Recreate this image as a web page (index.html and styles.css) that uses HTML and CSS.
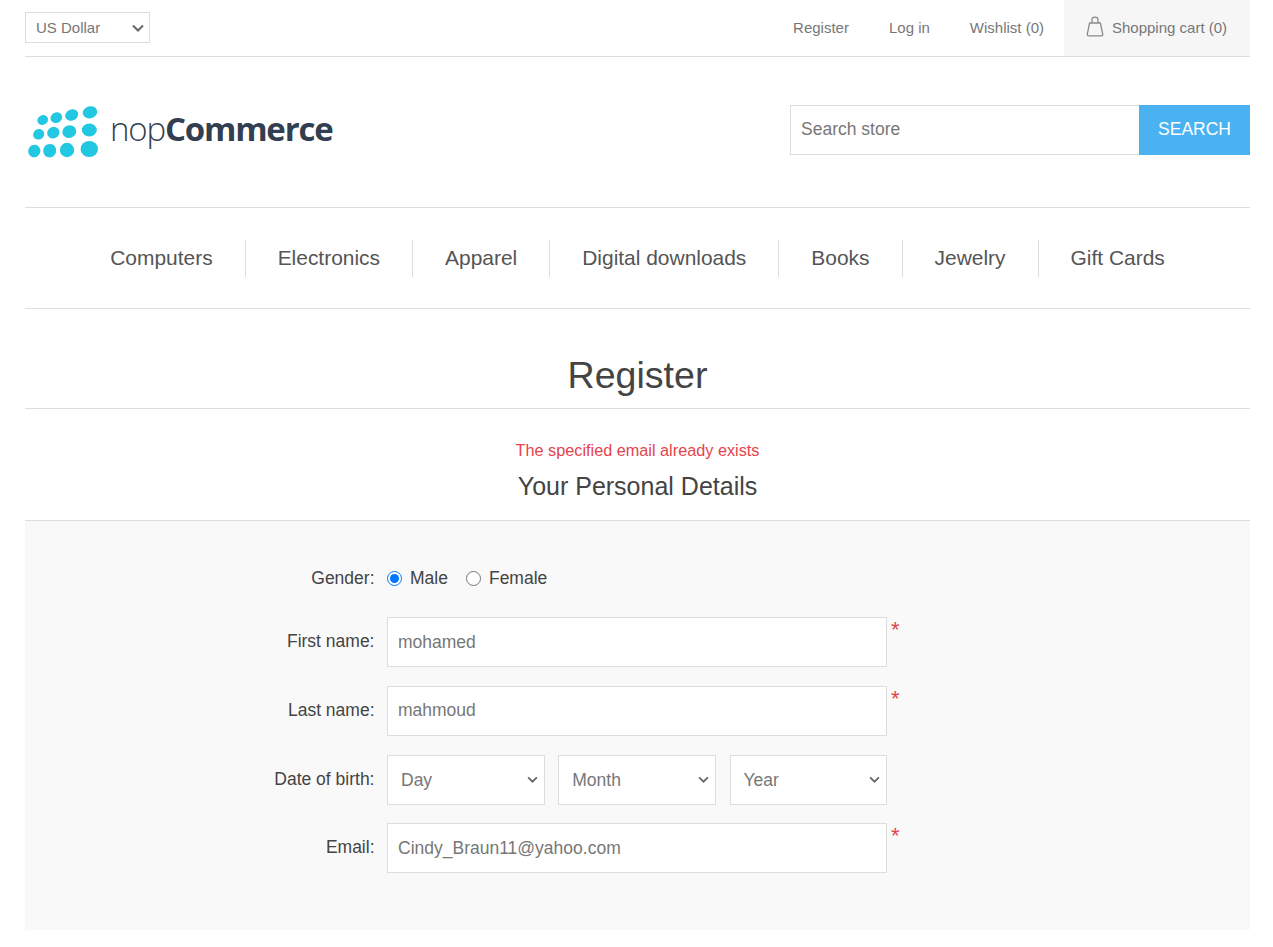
FILE: index.html
```html
<!DOCTYPE html>
<html lang="en">
<head>
    <meta charset="UTF-8">
    <title>Register</title>
    <link rel="stylesheet" href="styles.css">
</head>
<body>
    <div class="master">
        <div class="header-links">
            <select class="currency">
                <option>US Dollar</option>
            </select>
            <ul class="top-links">
                <li><a href="#">Register</a></li>
                <li><a href="#">Log in</a></li>
                <li><a href="#">Wishlist (0)</a></li>
                <li class="cart-link">
                    <svg class="cart-icon" width="18" height="21" viewBox="0 0 18 21" fill="none" stroke="#8a8a8a" stroke-width="1.3">
                        <path d="M3.6 7 L1.3 18 Q1 19.8 2.8 19.8 H15.2 Q17 19.8 16.7 18 L14.4 7 Z"/>
                        <path d="M6 7 V3.6 Q6 1.2 9 1.2 Q12 1.2 12 3.6 V7"/>
                    </svg>
                    <a href="#">Shopping cart (0)</a>
                </li>
            </ul>
        </div>

        <div class="header-main">
            <a class="logo" href="#">
                <svg width="72" height="54" viewBox="0 0 72 54" fill="#22c7e2">
                    <ellipse cx="15.7" cy="14" rx="5.5" ry="4.8" transform="rotate(-25 15.7 14)"/>
                    <ellipse cx="29.3" cy="11.7" rx="6" ry="5.2" transform="rotate(-25 29.3 11.7)"/>
                    <ellipse cx="44.7" cy="9" rx="6.7" ry="5.6" transform="rotate(-25 44.7 9)"/>
                    <ellipse cx="63" cy="6.3" rx="7.3" ry="6" transform="rotate(-15 63 6.3)"/>
                    <ellipse cx="11.7" cy="28.3" rx="5.6" ry="5.2" transform="rotate(-25 11.7 28.3)"/>
                    <ellipse cx="26.3" cy="26.7" rx="6.3" ry="5.7" transform="rotate(-25 26.3 26.7)"/>
                    <ellipse cx="42.3" cy="25.7" rx="7" ry="6.3" transform="rotate(-20 42.3 25.7)"/>
                    <ellipse cx="62.3" cy="24" rx="7.5" ry="6.5"/>
                    <ellipse cx="7.3" cy="45" rx="6" ry="6.4" transform="rotate(20 7.3 45)"/>
                    <ellipse cx="22.7" cy="44.7" rx="6.5" ry="6.8" transform="rotate(20 22.7 44.7)"/>
                    <ellipse cx="40" cy="44" rx="7.2" ry="7.2"/>
                    <ellipse cx="62.3" cy="43" rx="8.7" ry="8"/>
                </svg>
                <span class="logo-text">nop<b>Commerce</b></span>
            </a>
            <form class="search-box">
                <input class="search-input" type="text" placeholder="Search store">
                <button class="search-button" type="button">SEARCH</button>
            </form>
        </div>

        <ul class="top-menu">
            <li><a href="#">Computers</a></li>
            <li><a href="#">Electronics</a></li>
            <li><a href="#">Apparel</a></li>
            <li><a href="#">Digital downloads</a></li>
            <li><a href="#">Books</a></li>
            <li><a href="#">Jewelry</a></li>
            <li><a href="#">Gift Cards</a></li>
        </ul>

        <h1 class="page-title">Register</h1>
        <p class="message-error">The specified email already exists</p>
        <h2 class="section-title">Your Personal Details</h2>

        <form class="form-fields">
            <div class="field field-gender">
                <label class="field-label">Gender:</label>
                <span class="gender-option"><input type="radio" name="gender" id="male" checked><label for="male">Male</label></span>
                <span class="gender-option"><input type="radio" name="gender" id="female"><label for="female">Female</label></span>
            </div>
            <div class="field">
                <label class="field-label">First name:</label>
                <input class="text-box" type="text" value="mohamed">
                <span class="required">*</span>
            </div>
            <div class="field">
                <label class="field-label">Last name:</label>
                <input class="text-box" type="text" value="mahmoud">
                <span class="required">*</span>
            </div>
            <div class="field">
                <label class="field-label">Date of birth:</label>
                <div class="date-picker">
                    <select><option>Day</option></select>
                    <select><option>Month</option></select>
                    <select><option>Year</option></select>
                </div>
            </div>
            <div class="field">
                <label class="field-label">Email:</label>
                <input class="text-box" type="text" value="Cindy_Braun11@yahoo.com">
                <span class="required">*</span>
            </div>
        </form>
    </div>
</body>
</html>
```

FILE: styles.css
```css
* {
    box-sizing: border-box;
}

html, body {
    height: 947px;
    overflow: hidden;
}

body {
    margin: 0;
    font-family: "Liberation Sans", Arial, sans-serif;
    font-size: 16px;
    color: #444444;
    background: #ffffff;
}

a {
    color: inherit;
    text-decoration: none;
}

ul {
    list-style: none;
    margin: 0;
    padding: 0;
}

select {
    appearance: none;
    font-family: inherit;
    background-color: #ffffff;
    background-repeat: no-repeat;
    background-image: url("data:image/svg+xml,%3Csvg xmlns='http://www.w3.org/2000/svg' width='12' height='8' viewBox='0 0 12 8'%3E%3Cpath d='M1 1.5l5 5 5-5' fill='none' stroke='%23666' stroke-width='2'/%3E%3C/svg%3E");
}

.master {
    width: 1225px;
    margin-left: 25px;
}

/* Top strip */
.header-links {
    display: flex;
    justify-content: space-between;
    align-items: center;
    height: 57px;
    border-bottom: 1px solid #dddddd;
}

.currency {
    width: 125px;
    height: 31px;
    margin-top: -1px;
    padding: 0 10px;
    border: 1px solid #dddddd;
    border-radius: 0;
    font-size: 15px;
    color: #777777;
    background-position: right 5px center;
}

.top-links {
    display: flex;
    align-items: center;
    height: 56px;
    font-size: 15px;
    color: #777777;
}

.top-links li {
    padding: 0 20px 2px;
}

.top-links .cart-link {
    display: flex;
    align-items: center;
    gap: 8px;
    width: 186px;
    height: 56px;
    padding: 0 0 2px 22px;
    background: #f6f6f6;
}

.cart-icon {
    margin-bottom: 2px;
}

/* Logo and search */
.header-main {
    display: flex;
    justify-content: space-between;
    align-items: flex-start;
    height: 151px;
    border-bottom: 1px solid #dddddd;
}

.logo {
    display: flex;
    align-items: flex-start;
    gap: 11px;
    margin: 49px 0 0 2px;
}

.logo-text {
    margin-top: -4px;
    font-family: "Open Sans", sans-serif;
    font-size: 33px;
    font-weight: 300;
    letter-spacing: -1.2px;
    color: #333f50;
    line-height: 54px;
}

.logo-text b {
    font-weight: 700;
}

.search-box {
    display: flex;
    width: 460px;
    height: 50px;
    margin-top: 48px;
}

.search-input {
    flex: 1;
    min-width: 0;
    padding: 0 10px 2px;
    border: 1px solid #dddddd;
    border-right: 0;
    outline: 0;
    font: 17.5px "Liberation Sans", Arial, sans-serif;
    color: #777777;
}

.search-input::placeholder {
    color: #777777;
    opacity: 1;
}

.search-button {
    width: 111px;
    padding: 0 0 2px;
    border: 0;
    background: #4ab2f1;
    color: #ffffff;
    font: 17.5px "Liberation Sans", Arial, sans-serif;
}

/* Category menu */
.top-menu {
    display: flex;
    justify-content: center;
    align-items: center;
    height: 101px;
    border-bottom: 1px solid #dddddd;
    font-size: 20.95px;
    color: #555555;
}

.top-menu li {
    padding: 6px 32px 7px 32px;
    line-height: 24px;
    border-left: 1px solid #dddddd;
}

.top-menu li:first-child {
    border-left: 0;
}

/* Headings */
.page-title {
    height: 100px;
    margin: 0;
    padding-top: 42px;
    border-bottom: 1px solid #dddddd;
    text-align: center;
    font-size: 37.6px;
    font-weight: 400;
    line-height: 48px;
    color: #444444;
}

.message-error {
    margin: 0;
    padding: 31px 0 1px;
    text-align: center;
    font-size: 16.25px;
    line-height: 20px;
    color: #e4434b;
}

.section-title {
    height: 60px;
    margin: 0;
    padding-top: 7px;
    border-bottom: 1px solid #dddddd;
    text-align: center;
    font-size: 25px;
    font-weight: 400;
    line-height: 36px;
    color: #444444;
}

/* Registration form */
.form-fields {
    height: 409px;
    padding-top: 39px;
    background: #f9f9f9;
}

.field {
    display: flex;
    align-items: flex-start;
    margin-bottom: 18.67px;
}

.field-label {
    width: 349.5px;
    margin-right: 12.5px;
    text-align: right;
    font-size: 17.5px;
    line-height: 49.5px;
    color: #444444;
}

.text-box {
    width: 500px;
    height: 50px;
    padding: 0 10px;
    border: 1px solid #dddddd;
    outline: 0;
    font: 17.5px "Liberation Sans", Arial, sans-serif;
    color: #777777;
    background: #ffffff;
}

.required {
    margin-left: 4px;
    font-size: 22px;
    line-height: 26px;
    color: #e4434b;
}

.field-gender {
    height: 36px;
    margin-bottom: 21.33px;
    align-items: center;
}

.field-gender .field-label {
    line-height: 36px;
}

.gender-option {
    display: flex;
    align-items: center;
    margin-right: 18px;
    font-size: 17.5px;
}

.gender-option input {
    width: 15px;
    height: 15px;
    margin: 0 8px 0 0;
}

.date-picker {
    display: flex;
    justify-content: space-between;
    width: 500px;
}

.date-picker select {
    width: 157.5px;
    height: 50px;
    padding: 0 13px;
    border: 1px solid #dddddd;
    border-radius: 0;
    font-size: 17.5px;
    color: #777777;
    background-position: right 6px center;
    background-size: 11px 7px;
}
```
